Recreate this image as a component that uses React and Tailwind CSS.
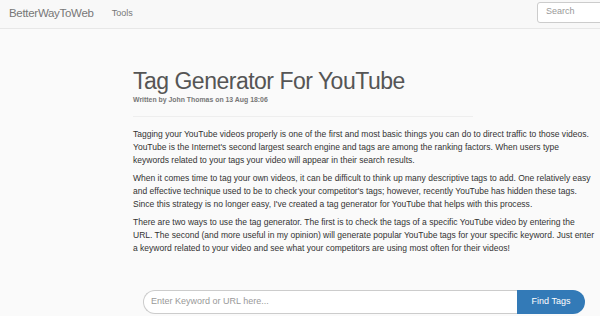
import React from 'react';

const paragraphs = [
    "Tagging your YouTube videos properly is one of the first and most basic things you can do to direct traffic to those videos. YouTube is the Internet's second largest search engine and tags are among the ranking factors. When users type keywords related to your tags your video will appear in their search results.",
    "When it comes time to tag your own videos, it can be difficult to think up many descriptive tags to add. One relatively easy and effective technique used to be to check your competitor's tags; however, recently YouTube has hidden these tags. Since this strategy is no longer easy, I've created a tag generator for YouTube that helps with this process.",
    "There are two ways to use the tag generator. The first is to check the tags of a specific YouTube video by entering the URL. The second (and more useful in my opinion) will generate popular YouTube tags for your specific keyword. Just enter a keyword related to your video and see what your competitors are using most often for their videos!",
];

const App = () => {
    return (
        <div className="w-[600px] h-[316px] overflow-hidden bg-[#fafafa] font-['Liberation_Sans',Arial,sans-serif]">
            {/* navbar */}
            <div className="h-[29px] bg-[#f8f8f8] border-b border-[#e7e7e7] flex items-center">
                <span className="ml-[9px] text-[11.5px] text-[#777] tracking-[-0.3px]">BetterWayToWeb</span>
                <span className="ml-[18px] text-[9px] text-[#777]">Tools</span>
                <div className="ml-auto mr-[-10px] w-[73px] h-[21px] mt-[-4px] bg-white border border-[#ccc] rounded-[3px] flex items-center pl-[8px] text-[9px] text-[#999]">
                    Search
                </div>
            </div>

            <div className="ml-[133px] w-[463px]">
                <h1 className="mt-[38px] text-[23px] leading-[28px] text-[#555] tracking-[-0.5px]">Tag Generator For YouTube</h1>
                <div className="text-[6.9px] leading-[10px] font-bold text-[#777]">Written by John Thomas on 13 Aug 18:06</div>
                <hr className="mt-[11px] w-[340px] border-t border-[#eee]" />

                <div className="mt-[11px] text-[8.52px] leading-[13px] text-[#333]">
                    {paragraphs.map((p, i) => (
                        <p key={i} className="mb-[5px]">{p}</p>
                    ))}
                </div>
            </div>

            {/* search box */}
            <div className="mt-[35px] ml-[143px] w-[442px] h-[24px] flex">
                <div className="flex-1 bg-white border border-[#ccc] border-r-0 rounded-l-full flex items-center pl-[7px] text-[9px] text-[#999]">
                    Enter Keyword or URL here...
                </div>
                <div className="w-[68px] bg-[#337ab7] rounded-r-full flex items-center justify-center text-[9px] text-white">
                    Find Tags
                </div>
            </div>
        </div>
    );
};

export default App;
